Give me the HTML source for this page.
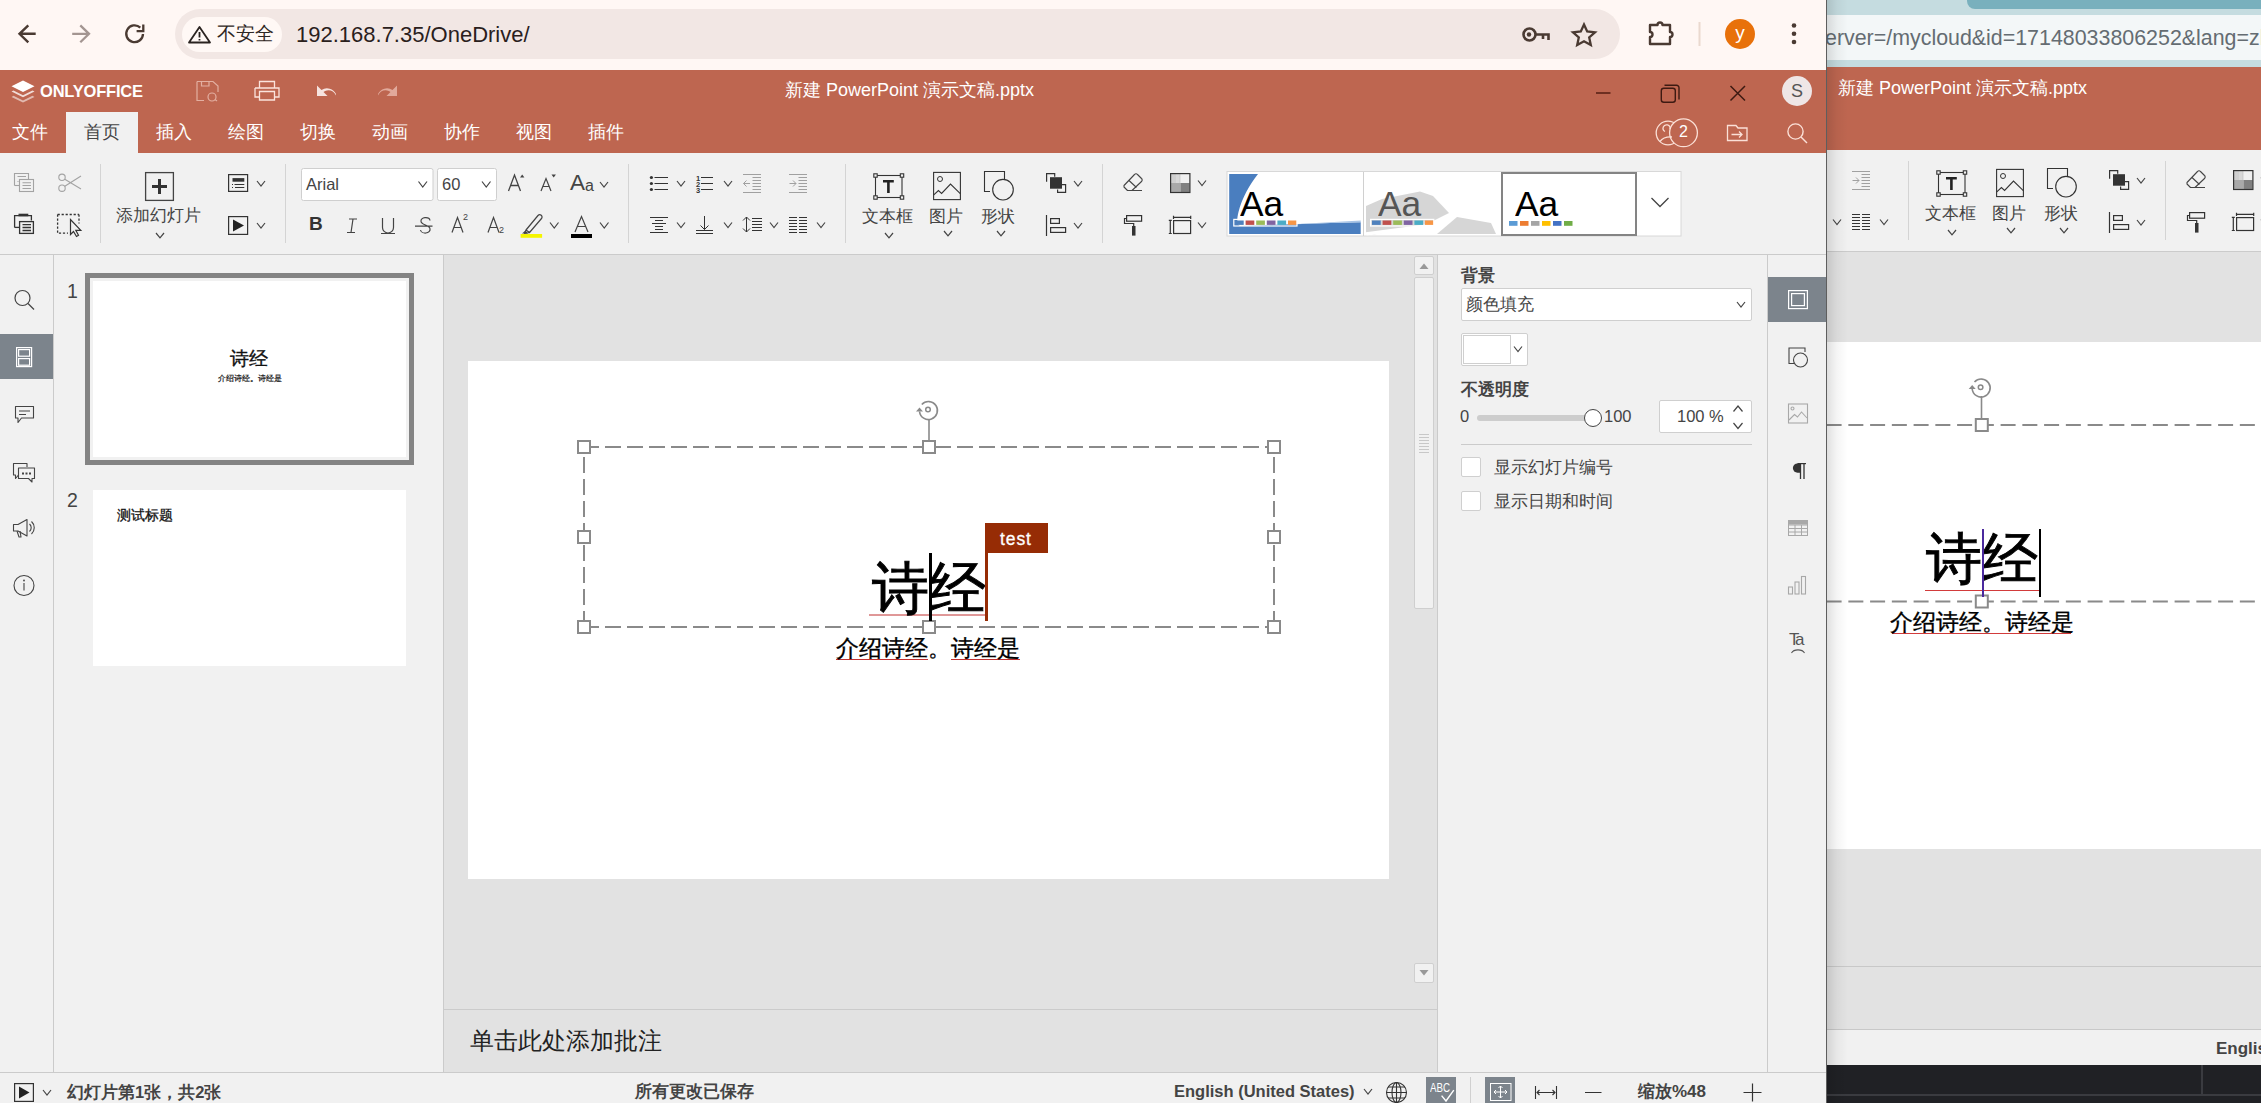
<!DOCTYPE html><html><head><meta charset="utf-8"><style>
*{margin:0;padding:0;box-sizing:border-box}
html,body{width:2261px;height:1103px;overflow:hidden;background:#1f2024;font-family:"Liberation Sans",sans-serif;color:#444}
.a{position:absolute}
svg{position:absolute;overflow:visible}
.t{position:absolute;white-space:nowrap;line-height:1}
</style></head><body><div class="a" style="left:1826px;top:0;width:435px;height:1103px;overflow:hidden;background:#f1f1f1"><div class="a" style="left:-1826px;top:0;width:2261px;height:1103px"><div class="a" style="left:1826px;top:0;width:435px;height:15px;background:#c5dce0"></div><div class="a" style="left:1967px;top:-10px;width:320px;height:18.5px;background:#79b0bd;border-radius:8px"></div><div class="a" style="left:1826px;top:15px;width:435px;height:45px;background:#f3f7f8"></div><div class="a" style="left:1826px;top:60px;width:435px;height:7px;background:#c5dce0"></div><div class="t" style="left:1825px;top:28px;font-size:21.4px;color:#646c72">erver=/mycloud&amp;id=17148033806252&amp;lang=zh-CN</div><div class="a" style="left:1826px;top:67px;width:435px;height:83px;background:#be6650"></div><div class="t" style="left:1838px;top:79px;font-size:18px;color:#fff">新建 PowerPoint 演示文稿.pptx</div><div class="a" style="left:1826px;top:150px;width:435px;height:101px;background:#f1f1f1"></div><svg style="left:1063px;top:-3px" width="1" height="1"><path d="M100.5 164V243" stroke="#d4d4d4" stroke-width="1"/><path d="M285.5 164V243" stroke="#d4d4d4" stroke-width="1"/><path d="M628.5 164V243" stroke="#d4d4d4" stroke-width="1"/><path d="M845.5 164V243" stroke="#d4d4d4" stroke-width="1"/><path d="M1102.5 164V243" stroke="#d4d4d4" stroke-width="1"/><g fill="none" stroke="#a3a3a3" stroke-width="1.1"><path d="M14.5 185.5V173.5H28.5V179"/><path d="M19.5 185.5H14.5"/><path d="M17.5 176.5H26M17.5 181.5H18.5"/><rect x="19.5" y="179.5" width="14" height="12" fill="#f1f1f1"/><path d="M22.5 182.7H31M22.5 185.5H31M22.5 188.5H31"/></g><g fill="none" stroke="#a3a3a3" stroke-width="1.1"><circle cx="62" cy="177.3" r="3.2"/><circle cx="62" cy="188.2" r="3.2"/><path d="M64.8 179.2L81 189M64.8 186.3L81 176"/></g><g fill="none" stroke="#333" stroke-width="1.3"><path d="M14.6 227.4V215.6H31.4V220.5"/><path d="M14.6 227.4H19"/><rect x="19.6" y="221.6" width="13.8" height="11.8"/><path d="M22.5 224.7H31M22.5 227.5H31M22.5 230.5H31"/></g><path d="M18.5 215H28.3" stroke="#333" stroke-width="2.6"/><g fill="none" stroke="#333" stroke-width="1.3" stroke-dasharray="2.2 1.8"><path d="M57.6 214.5H79M57.6 214.5V233.2H68M79 214.5V223.5"/></g><path d="M70.5 219.5V234.5L73.5 231.5L76.5 236.5L78.5 235.3L75.8 230.3H80.8Z" fill="#f1f1f1" stroke="#333" stroke-width="1.2" stroke-linejoin="miter"/><rect x="145.6" y="172.6" width="27.8" height="27.8" fill="none" stroke="#444" stroke-width="1.3"/><path d="M152 186.5H167M159.5 179V194" stroke="#333" stroke-width="3"/><path d="M156 233L160.0 237.8L164 233" fill="none" stroke="#444" stroke-width="1.2"/><rect x="228.6" y="174.6" width="19" height="16.8" fill="none" stroke="#333" stroke-width="1.2"/><path d="M232.5 179.9H244.3" stroke="#333" stroke-width="3.6"/><path d="M234.5 184.5H244.3M235 187.5H244.3M232 184.5H233M232 187.5H233" stroke="#333" stroke-width="1"/><path d="M257 181L261.0 186L265 181" fill="none" stroke="#444" stroke-width="1.2"/><rect x="228.6" y="216.6" width="19" height="17.8" fill="none" stroke="#333" stroke-width="1.2"/><path d="M233 219.5L244 225.5L233 231.5Z" fill="#222"/><path d="M257 223L261.0 228L265 223" fill="none" stroke="#444" stroke-width="1.2"/><rect x="301.5" y="168.5" width="131.5" height="32" rx="2" fill="#fff" stroke="#cfcfcf" stroke-width="1"/><rect x="437.5" y="168.5" width="59" height="32" rx="2" fill="#fff" stroke="#cfcfcf" stroke-width="1"/><path d="M418.5 181.5L422.75 187.0L427.0 181.5" fill="none" stroke="#444" stroke-width="1.2"/><path d="M482 181.5L486.25 187.0L490.5 181.5" fill="none" stroke="#444" stroke-width="1.2"/><path d="M508.5 191L514.5 175L520.5 191M510.7 185.5H518.3" fill="none" stroke="#444" stroke-width="1.3"/><path d="M520 177.5L522.2 174.5L524.4 177.5Z" fill="#444"/><path d="M541 191L546 178.5L551 191M542.8 186.5H549.2" fill="none" stroke="#444" stroke-width="1.2"/><path d="M551.5 174.5L553.7 177.5L555.9 174.5Z" fill="#444"/><path d="M600 182L604.0 187L608 182" fill="none" stroke="#444" stroke-width="1.2"/><path d="M349 219H357M347 232.5H355M353 219L351 232.5" fill="none" stroke="#444" stroke-width="1.2"/><path d="M382.5 218V227.5A5.5 5.5 0 0 0 393.5 227.5V218M381 233.5H395" fill="none" stroke="#444" stroke-width="1.2"/><path d="M430 220.5A4.5 3.2 0 0 0 421 221.3C421 225.5 430 224.5 430 229A4.6 3.4 0 0 1 420.5 230M415 226.2H432.5" fill="none" stroke="#444" stroke-width="1.2"/><path d="M452 232.5L457.5 217.5L463 232.5M454 227.5H461" fill="none" stroke="#444" stroke-width="1.2"/><path d="M488 232.5L493.5 217.5L499 232.5M490 227.5H497" fill="none" stroke="#444" stroke-width="1.2"/><path d="M526 230L538 215.5A2.2 2.2 0 0 1 541.5 218.5L529.5 232.5ZM524.5 233.5L526 230L529.5 232.5Z" fill="none" stroke="#444" stroke-width="1.2" stroke-linejoin="round"/><path d="M522 233.5L525.5 230.5L528 233.5Z" fill="#444"/><rect x="520.6" y="234" width="21.5" height="3.8" fill="#f5f500"/><path d="M550 222.5L554.25 228.0L558.5 222.5" fill="none" stroke="#444" stroke-width="1.2"/><path d="M575 232L581.5 216.5L588 232M577.3 226.5H585.7" fill="none" stroke="#444" stroke-width="1.2"/><rect x="571" y="234" width="21" height="4" fill="#000"/><path d="M600 222.5L604.25 228.0L608.5 222.5" fill="none" stroke="#444" stroke-width="1.2"/><g fill="#333"><circle cx="651.4" cy="177.5" r="1.6"/><circle cx="651.4" cy="183.5" r="1.6"/><circle cx="651.4" cy="189.5" r="1.6"/></g><path d="M654.5 177.5H668M654.5 183.5H668M654.5 189.5H668" stroke="#333" stroke-width="1"/><path d="M677 181L681.0 186L685 181" fill="none" stroke="#444" stroke-width="1.2"/><path d="M701 177.5H713M701 183.5H713M701 189.5H713" stroke="#333" stroke-width="1"/><text x="696" y="181" font-size="7.5" font-weight="bold" font-family="Liberation Sans" fill="#333">1</text><text x="696" y="187" font-size="7.5" font-weight="bold" font-family="Liberation Sans" fill="#333">2</text><text x="696" y="193" font-size="7.5" font-weight="bold" font-family="Liberation Sans" fill="#333">3</text><path d="M724 181L728.0 186L732 181" fill="none" stroke="#444" stroke-width="1.2"/><path d="M743 174.5H761M752.5 177.5H761M752.5 180.5H761M752.5 183.5H761M752.5 186.5H761M752.5 189.5H761M743 192.5H761" stroke="#a0a0a0" stroke-width="1"/><path d="M746.5 180.5L743.5 183.5L746.5 186.5M743.5 183.5H750" fill="none" stroke="#a0a0a0" stroke-width="1"/><path d="M789 174.5H807M798.5 177.5H807M798.5 180.5H807M798.5 183.5H807M798.5 186.5H807M798.5 189.5H807M789 192.5H807" stroke="#a0a0a0" stroke-width="1"/><path d="M793 180.5L796 183.5L793 186.5M789.5 183.5H796" fill="none" stroke="#a0a0a0" stroke-width="1"/><path d="M650 217.5H668M655 220.5H663M652 223.5H666M655 226.5H663M655 229.5H663M650 232.5H668" stroke="#333" stroke-width="1"/><path d="M677 222.5L681.0 227.5L685 222.5" fill="none" stroke="#444" stroke-width="1.2"/><path d="M704.5 216V229.5M700.5 225.5L704.5 229.5L708.5 225.5M696 230.5H713M696 233.5H713" fill="none" stroke="#333" stroke-width="1"/><path d="M724 222.5L728.0 227.5L732 222.5" fill="none" stroke="#444" stroke-width="1.2"/><path d="M746.5 217V232M743 220.5L746.5 217L750 220.5M743 228.5L746.5 232L750 228.5M752 218.5H762M752 221.5H762M752 224.5H762M752 227.5H762M752 230.5H762" fill="none" stroke="#333" stroke-width="1"/><path d="M770 222.5L774.0 227.5L778 222.5" fill="none" stroke="#444" stroke-width="1.2"/><path d="M789 217.5H797M799 217.5H807M789 220.5H797M799 220.5H807M789 223.5H797M799 223.5H807M789 226.5H797M799 226.5H807M789 229.5H797M799 229.5H807M789 232.5H797M799 232.5H807" stroke="#333" stroke-width="1.1"/><path d="M817 222.5L821.0 227.5L825 222.5" fill="none" stroke="#444" stroke-width="1.2"/><rect x="875.5" y="175.5" width="26.5" height="22" fill="none" stroke="#333" stroke-width="1.1"/><rect x="873.8" y="173.8" width="3.4" height="3.4" fill="#f1f1f1" stroke="#333" stroke-width="1.1"/><rect x="900.3" y="173.8" width="3.4" height="3.4" fill="#f1f1f1" stroke="#333" stroke-width="1.1"/><rect x="873.8" y="195.8" width="3.4" height="3.4" fill="#f1f1f1" stroke="#333" stroke-width="1.1"/><rect x="900.3" y="195.8" width="3.4" height="3.4" fill="#f1f1f1" stroke="#333" stroke-width="1.1"/><path d="M883 181.3H893.8M888.4 181V193" stroke="#222" stroke-width="2.6"/><path d="M885 233L889.0 237.8L893 233" fill="none" stroke="#444" stroke-width="1.2"/><rect x="933.6" y="172.4" width="26.8" height="27.2" fill="none" stroke="#333" stroke-width="1.1"/><circle cx="940" cy="179" r="2.5" fill="none" stroke="#333" stroke-width="1"/><path d="M933.8 194.8L938.4 190.5L941.6 193.5L950.5 184.1L960.3 193.7" fill="none" stroke="#333" stroke-width="1.1"/><path d="M944 231L948.0 235.8L952 231" fill="none" stroke="#444" stroke-width="1.2"/><path d="M990 191.5H984.5V171.5H1004.5V179.5" fill="none" stroke="#333" stroke-width="1.1"/><circle cx="1003" cy="189.7" r="10.3" fill="none" stroke="#333" stroke-width="1.1"/><path d="M997 231L1001.0 235.8L1005 231" fill="none" stroke="#444" stroke-width="1.2"/><path d="M1046.6 181.7V173.6H1054.7V176.8M1057.6 189.5V192.4H1065.6V184.6H1062" fill="none" stroke="#333" stroke-width="1.2"/><rect x="1050" y="177.2" width="12" height="11.5" fill="#333"/><path d="M1074 181L1078.0 186L1082 181" fill="none" stroke="#444" stroke-width="1.2"/><path d="M1046.5 215V236" stroke="#333" stroke-width="1.2"/><rect x="1050.6" y="218.6" width="8.8" height="4.8" fill="none" stroke="#333" stroke-width="1.2"/><rect x="1050.6" y="227.6" width="15" height="4.8" fill="none" stroke="#333" stroke-width="1.2"/><path d="M1074 223L1078.0 228L1082 223" fill="none" stroke="#444" stroke-width="1.2"/><path d="M1124 185.5L1134.5 174.5A2 2 0 0 1 1137.5 174.5L1141.5 178.5A2 2 0 0 1 1141.5 181.5L1132 190.5H1127.5L1124 187ZM1129 180.5L1136.5 187.5M1132 190.5H1142" fill="none" stroke="#444" stroke-width="1.1" stroke-linejoin="round"/><rect x="1126.6" y="215.6" width="15" height="5.6" fill="none" stroke="#333" stroke-width="1.2"/><path d="M1126.5 218.5H1124.5V223.5H1133.7V226.5" fill="none" stroke="#333" stroke-width="1.2"/><rect x="1132" y="226" width="3.5" height="9.6" fill="#333"/><rect x="1170.5" y="173.5" width="19.5" height="19" fill="#f0f0f0"/><rect x="1171" y="174" width="9.5" height="9.5" fill="#cfcfcf"/><rect x="1176" y="174" width="3" height="9.5" fill="#d8d8d8"/><rect x="1171" y="183" width="9.5" height="9.5" fill="#a9a9a9"/><rect x="1180.5" y="183" width="9" height="9.5" fill="#808080"/><rect x="1170.6" y="173.6" width="19.3" height="18.9" fill="none" stroke="#333" stroke-width="1.2"/><path d="M1198 180.5L1202.0 185.5L1206 180.5" fill="none" stroke="#444" stroke-width="1.2"/><g fill="none" stroke="#333" stroke-width="1.2"><rect x="1173.6" y="220.6" width="17" height="12.9"/><path d="M1173.5 217.4H1190.7M1173.5 215.8V219M1190.7 215.8V219M1170.3 220.3V233.5M1168.8 220.3H1171.8M1168.8 233.5H1171.8"/></g><path d="M1198 222.5L1202.0 227.5L1206 222.5" fill="none" stroke="#444" stroke-width="1.2"/><rect x="1227" y="171.5" width="454" height="64.5" fill="#fff" stroke="#d8d8d8" stroke-width="1"/><path d="M1229.2 174H1258C1250 184 1242 198 1238.5 212C1236.5 220 1237 225 1240 226C1280 225 1320 223 1360.7 222.3V234H1229.2Z" fill="#4a7ebf"/><path d="M1250 226C1290 225 1325 222.5 1360.7 220.5V222.3C1320 223 1285 225 1250 226Z" fill="#a8c4e6"/><path d="M1366 236V206L1382 199L1420 191.5L1433 196L1449 213L1425 225L1366 236Z" fill="#d6d6d6"/><path d="M1366 234L1442 224" stroke="#fff" stroke-width="3.5"/><path d="M1437 234L1457 217L1491 223L1496 234Z" fill="#d6d6d6"/><path d="M1363.5 172V236" stroke="#d0d0d0" stroke-width="1"/><rect x="1502" y="173" width="134" height="62" fill="#fff" stroke="#848484" stroke-width="2"/><path d="M1651.5 198L1660 206.5L1668.5 198" fill="none" stroke="#444" stroke-width="1.3"/><rect x="1235.0" y="220.5" width="8.7" height="4.4" fill="#4f81bd"/><rect x="1372.0" y="220.5" width="8.7" height="4.4" fill="#4f81bd"/><rect x="1245.6" y="220.5" width="8.7" height="4.4" fill="#c0504d"/><rect x="1382.6" y="220.5" width="8.7" height="4.4" fill="#c0504d"/><rect x="1256.2" y="220.5" width="8.7" height="4.4" fill="#9bbb59"/><rect x="1393.2" y="220.5" width="8.7" height="4.4" fill="#9bbb59"/><rect x="1266.8" y="220.5" width="8.7" height="4.4" fill="#8064a2"/><rect x="1403.8" y="220.5" width="8.7" height="4.4" fill="#8064a2"/><rect x="1277.4" y="220.5" width="8.7" height="4.4" fill="#4bacc6"/><rect x="1414.4" y="220.5" width="8.7" height="4.4" fill="#4bacc6"/><rect x="1288.0" y="220.5" width="8.7" height="4.4" fill="#f79646"/><rect x="1425.0" y="220.5" width="8.7" height="4.4" fill="#f79646"/><rect x="1233.8" y="219.4" width="63.2" height="6.6" fill="none" stroke="#fff" stroke-width="1.2"/><rect x="1370.6" y="219.4" width="63.2" height="6.6" fill="none" stroke="#fff" stroke-width="1.2"/><rect x="1509" y="221" width="8.5" height="4.8" fill="#5b9bd5"/><rect x="1520" y="221" width="8.5" height="4.8" fill="#ed7d31"/><rect x="1531" y="221" width="8.5" height="4.8" fill="#a5a5a5"/><rect x="1542" y="221" width="8.5" height="4.8" fill="#ffc000"/><rect x="1553" y="221" width="8.5" height="4.8" fill="#4472c4"/><rect x="1564" y="221" width="8.5" height="4.8" fill="#70ad47"/></svg><div class="t" style="left:1179px;top:205px;font-size:16.6px;color:#444;">添加幻灯片</div><div class="t" style="left:1369px;top:173px;font-size:16.5px;color:#444;">Arial</div><div class="t" style="left:1505px;top:173px;font-size:16.5px;color:#444;">60</div><div class="t" style="left:2303px;top:183px;font-size:35px;color:#000;transform:scaleX(1.01);transform-origin:0 0">Aa</div><div class="t" style="left:2441px;top:183px;font-size:35px;color:#555;transform:scaleX(1.01);transform-origin:0 0">Aa</div><div class="t" style="left:2578px;top:183px;font-size:35px;color:#000;transform:scaleX(1.01);transform-origin:0 0">Aa</div><div class="t" style="left:1633px;top:169px;font-size:22.5px;color:#444;">A</div><div class="t" style="left:1648px;top:175px;font-size:16px;color:#444;">a</div><div class="t" style="left:1372px;top:211px;font-size:19px;color:#333;font-weight:bold">B</div><div class="t" style="left:1526px;top:210px;font-size:9px;color:#444;">2</div><div class="t" style="left:1562px;top:223px;font-size:9px;color:#444;">2</div><div class="t" style="left:1925px;top:205px;font-size:16.5px;color:#444;">文本框</div><div class="t" style="left:1992px;top:205px;font-size:16.5px;color:#444;">图片</div><div class="t" style="left:2044px;top:205px;font-size:16.5px;color:#444;">形状</div><div class="a" style="left:1826px;top:251px;width:435px;height:1px;background:#cbcbcb"></div><div class="a" style="left:1826px;top:252px;width:435px;height:90px;background:#e2e2e2"></div><div class="a" style="left:1826px;top:342px;width:435px;height:507px;background:#fff"></div><div class="a" style="left:1826px;top:849px;width:435px;height:180px;background:#e2e2e2"></div><div class="a" style="left:1826px;top:966px;width:435px;height:1px;background:#c8c8c8"></div><div class="a" style="left:1826px;top:1029px;width:435px;height:1px;background:#c8c8c8"></div><div class="a" style="left:1826px;top:1030px;width:435px;height:35px;background:#f1f1f1"></div><div class="t" style="left:2216px;top:1040px;font-size:17px;font-weight:bold;color:#444">English (United States)</div><div class="a" style="left:1826px;top:1065px;width:435px;height:38px;background:#202125"></div><div class="a" style="left:2201px;top:1065px;width:2px;height:30px;background:#3a3b40"></div><div class="a" style="left:1826px;top:1094px;width:435px;height:2px;background:#3a3b40"></div><svg style="left:0;top:0" width="1" height="1"><path d="M1826 425H2261M1826 601.5H2261" stroke="#8a8a8a" stroke-width="2" stroke-dasharray="15 6.75" stroke-dashoffset="-0.6"/><rect x="1975.8" y="419" width="12" height="12" fill="#fff" stroke="#8a8a8a" stroke-width="2"/><rect x="1975.8" y="595.5" width="12" height="12" fill="#fff" stroke="#8a8a8a" stroke-width="2"/><path d="M1981.5 396V419" stroke="#8a8a8a" stroke-width="1.6"/><path d="M1974.5 382A9 9 0 1 1 1972.2 389" fill="none" stroke="#8a8a8a" stroke-width="1.6"/><path d="M1968.7 389H1975.7L1972.2 385Z" fill="#8a8a8a"/><circle cx="1980.6" cy="387.2" r="2.3" fill="none" stroke="#8a8a8a" stroke-width="1.5"/><path d="M1925 590.5H2039M1892 633.5H1983M1895 633.5H2071" stroke="#d23b3b" stroke-width="1"/></svg><div class="t" style="left:1926px;top:531px;font-size:56px;color:#000;-webkit-text-stroke:0.9px #000">诗经</div><div class="a" style="left:1981.5px;top:529px;width:2.5px;height:68px;background:#4b2a9e"></div><div class="a" style="left:2038.5px;top:529px;width:2.5px;height:68px;background:#000"></div><div class="t" style="left:1890px;top:611px;font-size:23px;color:#000;-webkit-text-stroke:0.35px #000">介绍诗经。诗经是</div></div><div class="a" style="left:0;top:0;width:22px;height:1103px;background:linear-gradient(90deg,rgba(0,0,0,0.13),rgba(0,0,0,0.04) 50%,rgba(0,0,0,0))"></div></div><div class="a" id="lw" style="left:0;top:0;width:1826px;height:1103px;overflow:hidden;background:#f1f1f1"><div class="a" style="left:0;top:0;width:1826px;height:70px;background:#fff7f4"></div><div class="a" style="left:175px;top:9px;width:1445px;height:50px;border-radius:25px;background:#f2e7e4"></div><div class="a" style="left:182px;top:17px;width:100px;height:35px;border-radius:18px;background:#fff8f5"></div><div class="a" style="left:0;top:70px;width:1826px;height:83px;background:#be6650"></div><div class="a" style="left:66px;top:112px;width:72px;height:41px;background:#f1f1f1"></div><svg style="left:0;top:0" width="1" height="1"><g fill="none" stroke="#4a3a32" stroke-width="2.4" stroke-linecap="butt" stroke-linejoin="miter"><path d="M19 33.8H35.7M28.3 25.4L19.5 33.8L28.3 42.3"/></g><g fill="none" stroke="#a39591" stroke-width="2.3"><path d="M72.2 33.8H89M80.3 25.4L89 33.8L80.3 42.3"/></g><g fill="none" stroke="#4a3a32" stroke-width="2.3"><path d="M143 34A8.4 8.4 0 1 1 140.3 27.6"/><path d="M143.3 24.6V31.2H136.6"/></g><path d="M199.5 27L210 42.5H189Z" fill="none" stroke="#2a2320" stroke-width="1.8" stroke-linejoin="round"/><path d="M199.5 32V37.5M199.5 39V40.6" stroke="#2a2320" stroke-width="1.8"/><g fill="none" stroke="#4a3a32" stroke-width="2.6"><circle cx="1529.5" cy="34.5" r="6"/><path d="M1535.5 34.5H1548.5V40M1543 34.5V39"/></g><circle cx="1529" cy="34.5" r="2.2" fill="#4a3a32"/><path d="M1584 24.5L1587.2 31.5L1595 32.3L1589.2 37.5L1590.8 45L1584 41.2L1577.2 45L1578.8 37.5L1573 32.3L1580.8 31.5Z" fill="none" stroke="#4a3a32" stroke-width="2.3" stroke-linejoin="miter"/><path d="M1650 25H1657.5A2.5 2.5 0 0 1 1662.5 25H1670V32A2.5 2.5 0 0 1 1670 37V44H1650V37A2.5 2.5 0 0 0 1650 32Z" fill="none" stroke="#4a3a32" stroke-width="2.4" stroke-linejoin="round"/><path d="M1699.5 22V46" stroke="#ead9cf" stroke-width="2"/><circle cx="1794" cy="25.5" r="2.3" fill="#4a3a32"/><circle cx="1794" cy="33.8" r="2.3" fill="#4a3a32"/><circle cx="1794" cy="42" r="2.3" fill="#4a3a32"/></svg><div class="a" style="left:1725px;top:19px;width:30px;height:30px;border-radius:50%;background:#e8710a"></div><div class="t" style="left:1733px;top:23px;font-size:19px;color:#fff;width:14px;text-align:center">y</div><div class="t" style="left:217px;top:24px;font-size:19px;color:#2f2724">不安全</div><div class="t" style="left:296px;top:24px;font-size:22px;color:#2a201c">192.168.7.35/OneDrive/</div><svg style="left:0;top:0" width="1" height="1"><path d="M23 80.5L34.5 86.3L23 92L11.5 86.3Z" fill="#fff"/><path d="M13.5 90.5L23 95.3L32.5 90.5L34.5 91.6L23 97.3L11.5 91.6Z" fill="#fff" opacity="0.78"/><path d="M13.5 95.8L23 100.5L32.5 95.8L34.5 96.9L23 102.5L11.5 96.9Z" fill="#fff" opacity="0.55"/><g fill="none" stroke="#f0c8bd" stroke-width="1.2" opacity="0.75"><path d="M197 81.5H213L218 86V92M197 81.5V100.5H204"/><path d="M201.5 81.5V86H209V81.5"/><circle cx="212" cy="97" r="4"/><path d="M215 99.5L217 101"/></g><g fill="none" stroke="#fbe3dc" stroke-width="1.3"><path d="M259.5 88V81.5H274.5V88"/><path d="M255 88H279V97H274.5M259.5 97H255V88"/><path d="M259.5 91.5H274.5V100H259.5Z"/></g><path d="M317 85.5V96H327.5L323.5 92A8 8 0 0 1 336 95.5L336 94A10 10 0 0 0 321.5 90Z" fill="#f6e3df"/><path d="M397 85.5V96H386.5L390.5 92A8 8 0 0 0 378 95.5L378 94A10 10 0 0 1 392.5 90Z" fill="#e8b5a8" opacity="0.85"/><path d="M1596 93H1610.5" stroke="#5a2216" stroke-width="1.6"/><g fill="none" stroke="#3d1a12" stroke-width="1.4"><rect x="1661.3" y="88.3" width="14" height="14" rx="2.5"/><path d="M1664.5 85.3H1676.5A2.5 2.5 0 0 1 1679 87.8V99.5"/></g><path d="M1730.5 86L1745 100.5M1745 86L1730.5 100.5" stroke="#3d1a12" stroke-width="1.5"/><g fill="none" stroke="#fbe0d7" stroke-width="1.3"><circle cx="1668" cy="133" r="11.8"/><circle cx="1683.5" cy="132.8" r="13.9" fill="#be6650"/><path d="M1660 141.5A12 8 0 0 1 1672 137"/><path d="M1665 131.5A3.5 3.5 0 1 1 1670 129"/></g><g fill="none" stroke="#fbe0d7" stroke-width="1.3"><path d="M1727.5 125.5H1736L1738 128H1747V140.5H1727.5Z"/><path d="M1731.5 134.5H1742M1739 131.5L1742 134.5L1739 137.5"/></g><g fill="none" stroke="#fbe0d7" stroke-width="1.4"><circle cx="1795.5" cy="131.5" r="7.6"/><path d="M1801 137L1807 143"/></g></svg><div class="t" style="left:40px;top:83px;font-size:16.5px;font-weight:bold;color:#fff;letter-spacing:-0.2px">ONLYOFFICE</div><div class="t" style="left:785px;top:81px;font-size:18px;color:#fff">新建 PowerPoint 演示文稿.pptx</div><div class="a" style="left:1782px;top:76px;width:30px;height:30px;border-radius:50%;background:#efe6e6"></div><div class="t" style="left:1782px;top:82px;width:30px;text-align:center;font-size:18px;color:#555">S</div><div class="t" style="left:1677px;top:124px;width:13px;text-align:center;font-size:16px;color:#fff">2</div><div class="t" style="left:12px;top:123px;font-size:18px;color:#fff">文件</div><div class="t" style="left:84px;top:123px;font-size:18px;color:#444">首页</div><div class="t" style="left:156px;top:123px;font-size:18px;color:#fff">插入</div><div class="t" style="left:228px;top:123px;font-size:18px;color:#fff">绘图</div><div class="t" style="left:300px;top:123px;font-size:18px;color:#fff">切换</div><div class="t" style="left:372px;top:123px;font-size:18px;color:#fff">动画</div><div class="t" style="left:444px;top:123px;font-size:18px;color:#fff">协作</div><div class="t" style="left:516px;top:123px;font-size:18px;color:#fff">视图</div><div class="t" style="left:588px;top:123px;font-size:18px;color:#fff">插件</div><div class="a" style="left:0;top:153px;width:1826px;height:101px;background:#f1f1f1"></div><div class="a" style="left:0;top:254px;width:1826px;height:1px;background:#cbcbcb"></div><svg style="left:0px;top:0px" width="1" height="1"><path d="M100.5 164V243" stroke="#d4d4d4" stroke-width="1"/><path d="M285.5 164V243" stroke="#d4d4d4" stroke-width="1"/><path d="M628.5 164V243" stroke="#d4d4d4" stroke-width="1"/><path d="M845.5 164V243" stroke="#d4d4d4" stroke-width="1"/><path d="M1102.5 164V243" stroke="#d4d4d4" stroke-width="1"/><g fill="none" stroke="#a3a3a3" stroke-width="1.1"><path d="M14.5 185.5V173.5H28.5V179"/><path d="M19.5 185.5H14.5"/><path d="M17.5 176.5H26M17.5 181.5H18.5"/><rect x="19.5" y="179.5" width="14" height="12" fill="#f1f1f1"/><path d="M22.5 182.7H31M22.5 185.5H31M22.5 188.5H31"/></g><g fill="none" stroke="#a3a3a3" stroke-width="1.1"><circle cx="62" cy="177.3" r="3.2"/><circle cx="62" cy="188.2" r="3.2"/><path d="M64.8 179.2L81 189M64.8 186.3L81 176"/></g><g fill="none" stroke="#333" stroke-width="1.3"><path d="M14.6 227.4V215.6H31.4V220.5"/><path d="M14.6 227.4H19"/><rect x="19.6" y="221.6" width="13.8" height="11.8"/><path d="M22.5 224.7H31M22.5 227.5H31M22.5 230.5H31"/></g><path d="M18.5 215H28.3" stroke="#333" stroke-width="2.6"/><g fill="none" stroke="#333" stroke-width="1.3" stroke-dasharray="2.2 1.8"><path d="M57.6 214.5H79M57.6 214.5V233.2H68M79 214.5V223.5"/></g><path d="M70.5 219.5V234.5L73.5 231.5L76.5 236.5L78.5 235.3L75.8 230.3H80.8Z" fill="#f1f1f1" stroke="#333" stroke-width="1.2" stroke-linejoin="miter"/><rect x="145.6" y="172.6" width="27.8" height="27.8" fill="none" stroke="#444" stroke-width="1.3"/><path d="M152 186.5H167M159.5 179V194" stroke="#333" stroke-width="3"/><path d="M156 233L160.0 237.8L164 233" fill="none" stroke="#444" stroke-width="1.2"/><rect x="228.6" y="174.6" width="19" height="16.8" fill="none" stroke="#333" stroke-width="1.2"/><path d="M232.5 179.9H244.3" stroke="#333" stroke-width="3.6"/><path d="M234.5 184.5H244.3M235 187.5H244.3M232 184.5H233M232 187.5H233" stroke="#333" stroke-width="1"/><path d="M257 181L261.0 186L265 181" fill="none" stroke="#444" stroke-width="1.2"/><rect x="228.6" y="216.6" width="19" height="17.8" fill="none" stroke="#333" stroke-width="1.2"/><path d="M233 219.5L244 225.5L233 231.5Z" fill="#222"/><path d="M257 223L261.0 228L265 223" fill="none" stroke="#444" stroke-width="1.2"/><rect x="301.5" y="168.5" width="131.5" height="32" rx="2" fill="#fff" stroke="#cfcfcf" stroke-width="1"/><rect x="437.5" y="168.5" width="59" height="32" rx="2" fill="#fff" stroke="#cfcfcf" stroke-width="1"/><path d="M418.5 181.5L422.75 187.0L427.0 181.5" fill="none" stroke="#444" stroke-width="1.2"/><path d="M482 181.5L486.25 187.0L490.5 181.5" fill="none" stroke="#444" stroke-width="1.2"/><path d="M508.5 191L514.5 175L520.5 191M510.7 185.5H518.3" fill="none" stroke="#444" stroke-width="1.3"/><path d="M520 177.5L522.2 174.5L524.4 177.5Z" fill="#444"/><path d="M541 191L546 178.5L551 191M542.8 186.5H549.2" fill="none" stroke="#444" stroke-width="1.2"/><path d="M551.5 174.5L553.7 177.5L555.9 174.5Z" fill="#444"/><path d="M600 182L604.0 187L608 182" fill="none" stroke="#444" stroke-width="1.2"/><path d="M349 219H357M347 232.5H355M353 219L351 232.5" fill="none" stroke="#444" stroke-width="1.2"/><path d="M382.5 218V227.5A5.5 5.5 0 0 0 393.5 227.5V218M381 233.5H395" fill="none" stroke="#444" stroke-width="1.2"/><path d="M430 220.5A4.5 3.2 0 0 0 421 221.3C421 225.5 430 224.5 430 229A4.6 3.4 0 0 1 420.5 230M415 226.2H432.5" fill="none" stroke="#444" stroke-width="1.2"/><path d="M452 232.5L457.5 217.5L463 232.5M454 227.5H461" fill="none" stroke="#444" stroke-width="1.2"/><path d="M488 232.5L493.5 217.5L499 232.5M490 227.5H497" fill="none" stroke="#444" stroke-width="1.2"/><path d="M526 230L538 215.5A2.2 2.2 0 0 1 541.5 218.5L529.5 232.5ZM524.5 233.5L526 230L529.5 232.5Z" fill="none" stroke="#444" stroke-width="1.2" stroke-linejoin="round"/><path d="M522 233.5L525.5 230.5L528 233.5Z" fill="#444"/><rect x="520.6" y="234" width="21.5" height="3.8" fill="#f5f500"/><path d="M550 222.5L554.25 228.0L558.5 222.5" fill="none" stroke="#444" stroke-width="1.2"/><path d="M575 232L581.5 216.5L588 232M577.3 226.5H585.7" fill="none" stroke="#444" stroke-width="1.2"/><rect x="571" y="234" width="21" height="4" fill="#000"/><path d="M600 222.5L604.25 228.0L608.5 222.5" fill="none" stroke="#444" stroke-width="1.2"/><g fill="#333"><circle cx="651.4" cy="177.5" r="1.6"/><circle cx="651.4" cy="183.5" r="1.6"/><circle cx="651.4" cy="189.5" r="1.6"/></g><path d="M654.5 177.5H668M654.5 183.5H668M654.5 189.5H668" stroke="#333" stroke-width="1"/><path d="M677 181L681.0 186L685 181" fill="none" stroke="#444" stroke-width="1.2"/><path d="M701 177.5H713M701 183.5H713M701 189.5H713" stroke="#333" stroke-width="1"/><text x="696" y="181" font-size="7.5" font-weight="bold" font-family="Liberation Sans" fill="#333">1</text><text x="696" y="187" font-size="7.5" font-weight="bold" font-family="Liberation Sans" fill="#333">2</text><text x="696" y="193" font-size="7.5" font-weight="bold" font-family="Liberation Sans" fill="#333">3</text><path d="M724 181L728.0 186L732 181" fill="none" stroke="#444" stroke-width="1.2"/><path d="M743 174.5H761M752.5 177.5H761M752.5 180.5H761M752.5 183.5H761M752.5 186.5H761M752.5 189.5H761M743 192.5H761" stroke="#a0a0a0" stroke-width="1"/><path d="M746.5 180.5L743.5 183.5L746.5 186.5M743.5 183.5H750" fill="none" stroke="#a0a0a0" stroke-width="1"/><path d="M789 174.5H807M798.5 177.5H807M798.5 180.5H807M798.5 183.5H807M798.5 186.5H807M798.5 189.5H807M789 192.5H807" stroke="#a0a0a0" stroke-width="1"/><path d="M793 180.5L796 183.5L793 186.5M789.5 183.5H796" fill="none" stroke="#a0a0a0" stroke-width="1"/><path d="M650 217.5H668M655 220.5H663M652 223.5H666M655 226.5H663M655 229.5H663M650 232.5H668" stroke="#333" stroke-width="1"/><path d="M677 222.5L681.0 227.5L685 222.5" fill="none" stroke="#444" stroke-width="1.2"/><path d="M704.5 216V229.5M700.5 225.5L704.5 229.5L708.5 225.5M696 230.5H713M696 233.5H713" fill="none" stroke="#333" stroke-width="1"/><path d="M724 222.5L728.0 227.5L732 222.5" fill="none" stroke="#444" stroke-width="1.2"/><path d="M746.5 217V232M743 220.5L746.5 217L750 220.5M743 228.5L746.5 232L750 228.5M752 218.5H762M752 221.5H762M752 224.5H762M752 227.5H762M752 230.5H762" fill="none" stroke="#333" stroke-width="1"/><path d="M770 222.5L774.0 227.5L778 222.5" fill="none" stroke="#444" stroke-width="1.2"/><path d="M789 217.5H797M799 217.5H807M789 220.5H797M799 220.5H807M789 223.5H797M799 223.5H807M789 226.5H797M799 226.5H807M789 229.5H797M799 229.5H807M789 232.5H797M799 232.5H807" stroke="#333" stroke-width="1.1"/><path d="M817 222.5L821.0 227.5L825 222.5" fill="none" stroke="#444" stroke-width="1.2"/><rect x="875.5" y="175.5" width="26.5" height="22" fill="none" stroke="#333" stroke-width="1.1"/><rect x="873.8" y="173.8" width="3.4" height="3.4" fill="#f1f1f1" stroke="#333" stroke-width="1.1"/><rect x="900.3" y="173.8" width="3.4" height="3.4" fill="#f1f1f1" stroke="#333" stroke-width="1.1"/><rect x="873.8" y="195.8" width="3.4" height="3.4" fill="#f1f1f1" stroke="#333" stroke-width="1.1"/><rect x="900.3" y="195.8" width="3.4" height="3.4" fill="#f1f1f1" stroke="#333" stroke-width="1.1"/><path d="M883 181.3H893.8M888.4 181V193" stroke="#222" stroke-width="2.6"/><path d="M885 233L889.0 237.8L893 233" fill="none" stroke="#444" stroke-width="1.2"/><rect x="933.6" y="172.4" width="26.8" height="27.2" fill="none" stroke="#333" stroke-width="1.1"/><circle cx="940" cy="179" r="2.5" fill="none" stroke="#333" stroke-width="1"/><path d="M933.8 194.8L938.4 190.5L941.6 193.5L950.5 184.1L960.3 193.7" fill="none" stroke="#333" stroke-width="1.1"/><path d="M944 231L948.0 235.8L952 231" fill="none" stroke="#444" stroke-width="1.2"/><path d="M990 191.5H984.5V171.5H1004.5V179.5" fill="none" stroke="#333" stroke-width="1.1"/><circle cx="1003" cy="189.7" r="10.3" fill="none" stroke="#333" stroke-width="1.1"/><path d="M997 231L1001.0 235.8L1005 231" fill="none" stroke="#444" stroke-width="1.2"/><path d="M1046.6 181.7V173.6H1054.7V176.8M1057.6 189.5V192.4H1065.6V184.6H1062" fill="none" stroke="#333" stroke-width="1.2"/><rect x="1050" y="177.2" width="12" height="11.5" fill="#333"/><path d="M1074 181L1078.0 186L1082 181" fill="none" stroke="#444" stroke-width="1.2"/><path d="M1046.5 215V236" stroke="#333" stroke-width="1.2"/><rect x="1050.6" y="218.6" width="8.8" height="4.8" fill="none" stroke="#333" stroke-width="1.2"/><rect x="1050.6" y="227.6" width="15" height="4.8" fill="none" stroke="#333" stroke-width="1.2"/><path d="M1074 223L1078.0 228L1082 223" fill="none" stroke="#444" stroke-width="1.2"/><path d="M1124 185.5L1134.5 174.5A2 2 0 0 1 1137.5 174.5L1141.5 178.5A2 2 0 0 1 1141.5 181.5L1132 190.5H1127.5L1124 187ZM1129 180.5L1136.5 187.5M1132 190.5H1142" fill="none" stroke="#444" stroke-width="1.1" stroke-linejoin="round"/><rect x="1126.6" y="215.6" width="15" height="5.6" fill="none" stroke="#333" stroke-width="1.2"/><path d="M1126.5 218.5H1124.5V223.5H1133.7V226.5" fill="none" stroke="#333" stroke-width="1.2"/><rect x="1132" y="226" width="3.5" height="9.6" fill="#333"/><rect x="1170.5" y="173.5" width="19.5" height="19" fill="#f0f0f0"/><rect x="1171" y="174" width="9.5" height="9.5" fill="#cfcfcf"/><rect x="1176" y="174" width="3" height="9.5" fill="#d8d8d8"/><rect x="1171" y="183" width="9.5" height="9.5" fill="#a9a9a9"/><rect x="1180.5" y="183" width="9" height="9.5" fill="#808080"/><rect x="1170.6" y="173.6" width="19.3" height="18.9" fill="none" stroke="#333" stroke-width="1.2"/><path d="M1198 180.5L1202.0 185.5L1206 180.5" fill="none" stroke="#444" stroke-width="1.2"/><g fill="none" stroke="#333" stroke-width="1.2"><rect x="1173.6" y="220.6" width="17" height="12.9"/><path d="M1173.5 217.4H1190.7M1173.5 215.8V219M1190.7 215.8V219M1170.3 220.3V233.5M1168.8 220.3H1171.8M1168.8 233.5H1171.8"/></g><path d="M1198 222.5L1202.0 227.5L1206 222.5" fill="none" stroke="#444" stroke-width="1.2"/><rect x="1227" y="171.5" width="454" height="64.5" fill="#fff" stroke="#d8d8d8" stroke-width="1"/><path d="M1229.2 174H1258C1250 184 1242 198 1238.5 212C1236.5 220 1237 225 1240 226C1280 225 1320 223 1360.7 222.3V234H1229.2Z" fill="#4a7ebf"/><path d="M1250 226C1290 225 1325 222.5 1360.7 220.5V222.3C1320 223 1285 225 1250 226Z" fill="#a8c4e6"/><path d="M1366 236V206L1382 199L1420 191.5L1433 196L1449 213L1425 225L1366 236Z" fill="#d6d6d6"/><path d="M1366 234L1442 224" stroke="#fff" stroke-width="3.5"/><path d="M1437 234L1457 217L1491 223L1496 234Z" fill="#d6d6d6"/><path d="M1363.5 172V236" stroke="#d0d0d0" stroke-width="1"/><rect x="1502" y="173" width="134" height="62" fill="#fff" stroke="#848484" stroke-width="2"/><path d="M1651.5 198L1660 206.5L1668.5 198" fill="none" stroke="#444" stroke-width="1.3"/><rect x="1235.0" y="220.5" width="8.7" height="4.4" fill="#4f81bd"/><rect x="1372.0" y="220.5" width="8.7" height="4.4" fill="#4f81bd"/><rect x="1245.6" y="220.5" width="8.7" height="4.4" fill="#c0504d"/><rect x="1382.6" y="220.5" width="8.7" height="4.4" fill="#c0504d"/><rect x="1256.2" y="220.5" width="8.7" height="4.4" fill="#9bbb59"/><rect x="1393.2" y="220.5" width="8.7" height="4.4" fill="#9bbb59"/><rect x="1266.8" y="220.5" width="8.7" height="4.4" fill="#8064a2"/><rect x="1403.8" y="220.5" width="8.7" height="4.4" fill="#8064a2"/><rect x="1277.4" y="220.5" width="8.7" height="4.4" fill="#4bacc6"/><rect x="1414.4" y="220.5" width="8.7" height="4.4" fill="#4bacc6"/><rect x="1288.0" y="220.5" width="8.7" height="4.4" fill="#f79646"/><rect x="1425.0" y="220.5" width="8.7" height="4.4" fill="#f79646"/><rect x="1233.8" y="219.4" width="63.2" height="6.6" fill="none" stroke="#fff" stroke-width="1.2"/><rect x="1370.6" y="219.4" width="63.2" height="6.6" fill="none" stroke="#fff" stroke-width="1.2"/><rect x="1509" y="221" width="8.5" height="4.8" fill="#5b9bd5"/><rect x="1520" y="221" width="8.5" height="4.8" fill="#ed7d31"/><rect x="1531" y="221" width="8.5" height="4.8" fill="#a5a5a5"/><rect x="1542" y="221" width="8.5" height="4.8" fill="#ffc000"/><rect x="1553" y="221" width="8.5" height="4.8" fill="#4472c4"/><rect x="1564" y="221" width="8.5" height="4.8" fill="#70ad47"/></svg><div class="t" style="left:116px;top:208px;font-size:16.6px;color:#444;">添加幻灯片</div><div class="t" style="left:306px;top:176px;font-size:16.5px;color:#444;">Arial</div><div class="t" style="left:442px;top:176px;font-size:16.5px;color:#444;">60</div><div class="t" style="left:1240px;top:186px;font-size:35px;color:#000;transform:scaleX(1.01);transform-origin:0 0">Aa</div><div class="t" style="left:1378px;top:186px;font-size:35px;color:#555;transform:scaleX(1.01);transform-origin:0 0">Aa</div><div class="t" style="left:1515px;top:186px;font-size:35px;color:#000;transform:scaleX(1.01);transform-origin:0 0">Aa</div><div class="t" style="left:570px;top:172px;font-size:22.5px;color:#444;">A</div><div class="t" style="left:585px;top:178px;font-size:16px;color:#444;">a</div><div class="t" style="left:309px;top:214px;font-size:19px;color:#333;font-weight:bold">B</div><div class="t" style="left:463px;top:213px;font-size:9px;color:#444;">2</div><div class="t" style="left:499px;top:226px;font-size:9px;color:#444;">2</div><div class="t" style="left:862px;top:208px;font-size:16.5px;color:#444;">文本框</div><div class="t" style="left:929px;top:208px;font-size:16.5px;color:#444;">图片</div><div class="t" style="left:981px;top:208px;font-size:16.5px;color:#444;">形状</div><div class="a" style="left:53px;top:255px;width:1px;height:817px;background:#cbcbcb"></div><div class="a" style="left:0;top:334px;width:53px;height:45px;background:#7c848c"></div><div class="a" style="left:443px;top:255px;width:1px;height:817px;background:#cbcbcb"></div><div class="a" style="left:444px;top:255px;width:993px;height:817px;background:#e2e2e2"></div><div class="a" style="left:444px;top:1009px;width:993px;height:1px;background:#cbcbcb"></div><div class="a" style="left:468px;top:361px;width:921px;height:518px;background:#fff"></div><div class="a" style="left:1437px;top:255px;width:1px;height:817px;background:#cbcbcb"></div><div class="a" style="left:1767px;top:255px;width:1px;height:817px;background:#cbcbcb"></div><div class="a" style="left:1768px;top:277px;width:58px;height:45px;background:#7c848c"></div><svg style="left:0;top:0" width="1" height="1"><g fill="none" stroke="#444" stroke-width="1.2"><circle cx="22.5" cy="298" r="7.5"/><path d="M28 303.5L34 309.5"/></g><g fill="none" stroke="#fff" stroke-width="1.2"><rect x="16.6" y="347.6" width="15" height="19"/><rect x="18.6" y="349.6" width="11" height="6.6"/><rect x="18.6" y="358.6" width="11" height="6.6"/></g><g fill="none" stroke="#444" stroke-width="1.1" stroke-linejoin="round"><path d="M15.5 406.5H33.5V418H21.5L18 422.5V418H15.5Z"/><path d="M19 411H30M19 414.5H26"/></g><g fill="none" stroke="#444" stroke-width="1.1" stroke-linejoin="round"><path d="M27 467V463.5H13.5V475H15.5V478.5L18.5 475"/><path d="M18.5 468H34.5V478.5H32V482L28.5 478.5H18.5Z"/></g><g fill="#444"><rect x="22" y="472.5" width="2" height="2"/><rect x="25.5" y="472.5" width="2" height="2"/><rect x="29" y="472.5" width="2" height="2"/></g><g fill="none" stroke="#444" stroke-width="1.1" stroke-linejoin="round"><path d="M13.5 524.5H18L27 519.5V536L18 531H13.5Z"/><path d="M17 531L19 537H21L20 531"/><path d="M29.5 524A5 5 0 0 1 29.5 531.5M31.5 521.5A8.5 8.5 0 0 1 31.5 534"/></g><g fill="none" stroke="#444" stroke-width="1.1"><circle cx="24" cy="585.5" r="10"/><path d="M24 583V590.5"/></g><circle cx="24" cy="580.5" r="0.9" fill="#444"/></svg><div class="t" style="left:67px;top:282px;font-size:19.5px;color:#444">1</div><div class="t" style="left:67px;top:491px;font-size:19.5px;color:#444">2</div><div class="a" style="left:85px;top:273px;width:329px;height:192px;border:5px solid #848484;background:#f1f1f1"></div><div class="a" style="left:93px;top:281px;width:313px;height:176px;background:#fff"></div><div class="t" style="left:229.5px;top:350px;font-size:18.5px;color:#111;-webkit-text-stroke:0.35px #111">诗经</div><div class="t" style="left:218px;top:375px;font-size:7.5px;color:#111;-webkit-text-stroke:0.2px #111">介绍诗经。诗经是</div><div class="a" style="left:93px;top:490px;width:313px;height:176px;background:#fff"></div><div class="t" style="left:116.5px;top:508px;font-size:14px;color:#111;-webkit-text-stroke:0.3px #111">测试标题</div><svg style="left:0;top:0" width="1" height="1"><path d="M583 447H1275M583 627H1275" stroke="#8a8a8a" stroke-width="2" stroke-dasharray="16 6"/><path d="M584 447V627M1274 447V627" stroke="#8a8a8a" stroke-width="2" stroke-dasharray="16 6" stroke-dashoffset="12"/><rect x="578" y="441" width="12" height="12" fill="#fff" stroke="#8a8a8a" stroke-width="2"/><rect x="578" y="531" width="12" height="12" fill="#fff" stroke="#8a8a8a" stroke-width="2"/><rect x="578" y="621" width="12" height="12" fill="#fff" stroke="#8a8a8a" stroke-width="2"/><rect x="923" y="441" width="12" height="12" fill="#fff" stroke="#8a8a8a" stroke-width="2"/><rect x="923" y="621" width="12" height="12" fill="#fff" stroke="#8a8a8a" stroke-width="2"/><rect x="1268" y="441" width="12" height="12" fill="#fff" stroke="#8a8a8a" stroke-width="2"/><rect x="1268" y="531" width="12" height="12" fill="#fff" stroke="#8a8a8a" stroke-width="2"/><rect x="1268" y="621" width="12" height="12" fill="#fff" stroke="#8a8a8a" stroke-width="2"/><path d="M929 419V440" stroke="#8a8a8a" stroke-width="1.6"/><path d="M921.8 404.5A9 9 0 1 1 919.5 411.5" fill="none" stroke="#8a8a8a" stroke-width="1.6"/><path d="M916 411.5H923L919.5 407.5Z" fill="#8a8a8a"/><circle cx="928" cy="409.5" r="2.3" fill="none" stroke="#8a8a8a" stroke-width="1.5"/><path d="M869 615H986" stroke="#c03030" stroke-width="1"/><path d="M836 659.5H928M951 659.5H1020" stroke="#c03030" stroke-width="1"/></svg><div class="t" style="left:871.5px;top:560px;font-size:57px;color:#000;-webkit-text-stroke:0.9px #000">诗经</div><div class="a" style="left:928.5px;top:553px;width:3px;height:68px;background:#000"></div><div class="a" style="left:985px;top:523px;width:3px;height:98px;background:#962c05"></div><div class="a" style="left:985px;top:523px;width:63px;height:30px;background:#962c05"></div><div class="t" style="left:1000px;top:531px;font-size:17.5px;color:#fff;letter-spacing:0.9px;-webkit-text-stroke:0.3px #fff">test</div><div class="t" style="left:836px;top:637px;font-size:23px;color:#000;-webkit-text-stroke:0.35px #000">介绍诗经。诗经是</div><div class="a" style="left:1414px;top:256px;width:20px;height:19px;background:#f1f1f1;border:1px solid #cfcfcf;border-radius:2px"></div><div class="a" style="left:1414px;top:277px;width:20px;height:332px;background:#f1f1f1;border:1px solid #cfcfcf;border-radius:2px"></div><div class="a" style="left:1414px;top:963px;width:20px;height:20px;background:#f1f1f1;border:1px solid #cfcfcf;border-radius:2px"></div><svg style="left:0;top:0" width="1" height="1"><path d="M1419.5 269L1424 263.5L1428.5 269Z" fill="#999"/><path d="M1419.5 970L1424 975.5L1428.5 970Z" fill="#999"/><path d="M1419 434.5H1429M1419 437.5H1429M1419 440.5H1429M1419 443.5H1429M1419 446.5H1429M1419 449.5H1429M1419 452.5H1429" stroke="#c8c8c8" stroke-width="1"/></svg><div class="t" style="left:470px;top:1029px;font-size:24px;color:#222">单击此处添加批注</div><div class="t" style="left:1461px;top:267px;font-size:16.5px;font-weight:bold;color:#444">背景</div><div class="a" style="left:1461px;top:288px;width:291px;height:33px;background:#fff;border:1px solid #cfcfcf;border-radius:2px"></div><div class="t" style="left:1466px;top:296px;font-size:16.5px;color:#444">颜色填充</div><div class="a" style="left:1461px;top:333px;width:67px;height:33px;background:#fff;border:1px solid #cfcfcf;border-radius:2px"></div><div class="a" style="left:1463px;top:335px;width:48px;height:29px;background:#fff;border:1px solid #cfcfcf"></div><div class="t" style="left:1461px;top:381px;font-size:16.5px;font-weight:bold;color:#444">不透明度</div><div class="t" style="left:1460px;top:408px;font-size:16.5px;color:#444">0</div><div class="a" style="left:1477px;top:415px;width:110px;height:6px;background:#cdcdcd;border-radius:3px"></div><div class="a" style="left:1584px;top:409px;width:18px;height:18px;background:#fff;border:1.2px solid #444;border-radius:50%"></div><div class="t" style="left:1604px;top:408px;font-size:16.5px;color:#444">100</div><div class="a" style="left:1659px;top:400px;width:93px;height:33px;background:#fff;border:1px solid #cfcfcf;border-radius:2px"></div><div class="t" style="left:1677px;top:408px;font-size:16.5px;color:#444">100 %</div><div class="a" style="left:1461px;top:444px;width:291px;height:1px;background:#cbcbcb"></div><div class="a" style="left:1461px;top:457px;width:20px;height:20px;background:#fff;border:1px solid #cfcfcf;border-radius:2px"></div><div class="a" style="left:1461px;top:491px;width:20px;height:20px;background:#fff;border:1px solid #cfcfcf;border-radius:2px"></div><div class="t" style="left:1494px;top:459px;font-size:16.5px;color:#444">显示幻灯片编号</div><div class="t" style="left:1494px;top:493px;font-size:16.5px;color:#444">显示日期和时间</div><svg style="left:0;top:0" width="1" height="1"><path d="M1737 302L1741.0 307L1745 302" fill="none" stroke="#444" stroke-width="1.2"/><path d="M1514 346.5L1518.0 351.5L1522 346.5" fill="none" stroke="#444" stroke-width="1.2"/><path d="M1733.5 411.5L1738 406L1742.5 411.5" fill="none" stroke="#444" stroke-width="1.2"/><path d="M1733.5 423L1738 428.5L1742.5 423" fill="none" stroke="#444" stroke-width="1.2"/><g fill="none" stroke="#fff" stroke-width="1.2"><rect x="1788.6" y="290.6" width="18.8" height="18"/><rect x="1791.6" y="293.6" width="12.8" height="12"/></g><g fill="none" stroke="#444" stroke-width="1.1"><path d="M1794 363.5H1789V348H1805V352"/><circle cx="1800.5" cy="360" r="7" fill="#f1f1f1"/></g><g fill="none" stroke="#a8a8a8" stroke-width="1.1"><rect x="1788.5" y="404" width="19" height="19"/><circle cx="1792.5" cy="408.5" r="1.5"/><path d="M1789 420L1794.5 414.5L1797.5 417L1801.5 412L1807 418"/></g><path d="M1800.5 463V479M1804 463V479" stroke="#333" stroke-width="1.3"/><path d="M1800.5 463.5H1797.5A4.6 4.6 0 0 0 1797.5 472.7H1800.5Z" fill="#333"/><path d="M1797.5 463.6H1806" stroke="#333" stroke-width="1.2"/><g fill="none" stroke="#a8a8a8" stroke-width="1"><rect x="1788.5" y="520.5" width="19" height="15"/><path d="M1788.5 525H1807.5M1788.5 528.5H1807.5M1788.5 532H1807.5M1795 525V535.5M1801.5 525V535.5"/></g><rect x="1788.5" y="520.5" width="19" height="4" fill="#a8a8a8"/><g fill="none" stroke="#a8a8a8" stroke-width="1.1"><rect x="1788.5" y="587" width="4" height="7"/><rect x="1795" y="582" width="4" height="12"/><rect x="1801.5" y="576.5" width="4" height="17.5"/></g><path d="M1791.5 653A7 5 0 0 1 1804.5 653" fill="none" stroke="#555" stroke-width="1.1"/></svg><div class="t" style="left:1789px;top:631px;font-size:17px;color:#555;letter-spacing:-2.5px">Ta</div><svg style="left:0;top:0" width="1" height="1"><rect x="14.6" y="1083.6" width="18.8" height="17.8" fill="none" stroke="#333" stroke-width="1.2"/><path d="M19 1086.5L29.5 1092.5L19 1098.5Z" fill="#222"/><path d="M43 1090L47.0 1095L51 1090" fill="none" stroke="#444" stroke-width="1.2"/><path d="M1364 1089L1368.0 1094L1372 1089" fill="none" stroke="#444" stroke-width="1.2"/><g fill="none" stroke="#333" stroke-width="1.1"><circle cx="1396.5" cy="1092.5" r="10"/><ellipse cx="1396.5" cy="1092.5" rx="4.5" ry="10"/><path d="M1386.5 1092.5H1406.5M1396.5 1082.5V1102.5M1388 1087H1405M1388 1098H1405"/></g><rect x="1426" y="1077" width="30" height="26" fill="#7c848c"/><path d="M1470.5 1077V1103" stroke="#d0d0d0"/><rect x="1485" y="1077" width="30" height="26" fill="#7c848c"/><path d="M1441.6 1095.6L1446 1101L1453.8 1090.1" fill="none" stroke="#fff" stroke-width="1.4"/><g fill="none" stroke="#fff" stroke-width="1"><rect x="1490.5" y="1083.5" width="20.5" height="17"/><path d="M1500.5 1086V1098M1494 1092H1507M1498.5 1088L1500.5 1086L1502.5 1088M1498.5 1096L1500.5 1098L1502.5 1096M1496 1090L1494 1092L1496 1094M1505 1090L1507 1092L1505 1094"/></g><g fill="none" stroke="#333" stroke-width="1.1"><path d="M1535.5 1086V1099M1556.5 1086V1099M1537 1092.5H1555M1539.5 1090L1537 1092.5L1539.5 1095M1552.5 1090L1555 1092.5L1552.5 1095"/></g><path d="M1585 1092.5H1601.5M1743.5 1092.5H1761.5M1752.5 1083.5V1101.5" stroke="#333" stroke-width="1.2"/></svg><div class="t" style="left:1429.5px;top:1082px;font-size:12.5px;color:#fff;transform:scaleX(0.78);transform-origin:0 0">ABC</div><div class="t" style="left:67px;top:1084px;font-size:16.5px;font-weight:bold;color:#444">幻灯片第1张，共2张</div><div class="t" style="left:635px;top:1083px;font-size:17px;font-weight:bold;color:#444">所有更改已保存</div><div class="t" style="left:1174px;top:1083px;font-size:16.5px;font-weight:bold;color:#444">English (United States)</div><div class="t" style="left:1638px;top:1083px;font-size:17px;font-weight:bold;color:#444">缩放%48</div><div class="a" style="left:0;top:1072px;width:1826px;height:1px;background:#cbcbcb"></div></div><div class="a" style="left:1826px;top:0;width:1px;height:1103px;background:#5e5e5e"></div></body></html>
